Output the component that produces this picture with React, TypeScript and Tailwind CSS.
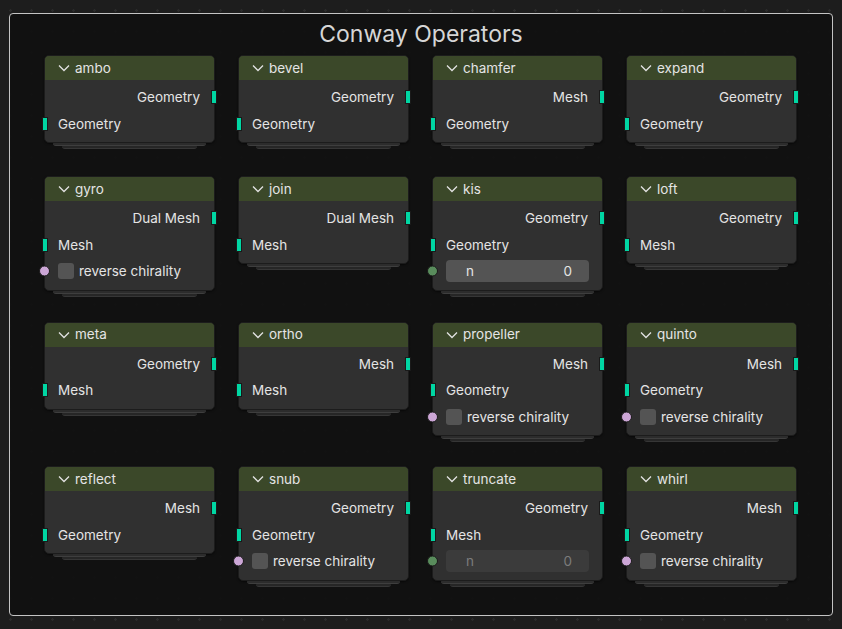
import React from "react";

type Field =
  | { kind: "out"; label: string }
  | { kind: "in"; label: string }
  | { kind: "bool"; label: string }
  | { kind: "int"; label: string; value: number; disabled?: boolean };

interface NodeSpec {
  title: string;
  fields: Field[];
}

const rows: NodeSpec[][] = [
  [
    { title: "ambo", fields: [{ kind: "out", label: "Geometry" }, { kind: "in", label: "Geometry" }] },
    { title: "bevel", fields: [{ kind: "out", label: "Geometry" }, { kind: "in", label: "Geometry" }] },
    { title: "chamfer", fields: [{ kind: "out", label: "Mesh" }, { kind: "in", label: "Geometry" }] },
    { title: "expand", fields: [{ kind: "out", label: "Geometry" }, { kind: "in", label: "Geometry" }] },
  ],
  [
    {
      title: "gyro",
      fields: [
        { kind: "out", label: "Dual Mesh" },
        { kind: "in", label: "Mesh" },
        { kind: "bool", label: "reverse chirality" },
      ],
    },
    { title: "join", fields: [{ kind: "out", label: "Dual Mesh" }, { kind: "in", label: "Mesh" }] },
    {
      title: "kis",
      fields: [
        { kind: "out", label: "Geometry" },
        { kind: "in", label: "Geometry" },
        { kind: "int", label: "n", value: 0 },
      ],
    },
    { title: "loft", fields: [{ kind: "out", label: "Geometry" }, { kind: "in", label: "Mesh" }] },
  ],
  [
    { title: "meta", fields: [{ kind: "out", label: "Geometry" }, { kind: "in", label: "Mesh" }] },
    { title: "ortho", fields: [{ kind: "out", label: "Mesh" }, { kind: "in", label: "Mesh" }] },
    {
      title: "propeller",
      fields: [
        { kind: "out", label: "Mesh" },
        { kind: "in", label: "Geometry" },
        { kind: "bool", label: "reverse chirality" },
      ],
    },
    {
      title: "quinto",
      fields: [
        { kind: "out", label: "Mesh" },
        { kind: "in", label: "Geometry" },
        { kind: "bool", label: "reverse chirality" },
      ],
    },
  ],
  [
    { title: "reflect", fields: [{ kind: "out", label: "Mesh" }, { kind: "in", label: "Geometry" }] },
    {
      title: "snub",
      fields: [
        { kind: "out", label: "Geometry" },
        { kind: "in", label: "Geometry" },
        { kind: "bool", label: "reverse chirality" },
      ],
    },
    {
      title: "truncate",
      fields: [
        { kind: "out", label: "Geometry" },
        { kind: "in", label: "Mesh" },
        { kind: "int", label: "n", value: 0, disabled: true },
      ],
    },
    {
      title: "whirl",
      fields: [
        { kind: "out", label: "Mesh" },
        { kind: "in", label: "Geometry" },
        { kind: "bool", label: "reverse chirality" },
      ],
    },
  ],
];

const rowSpacing = ["mt-0", "mt-[27px]", "mt-[25px]", "mt-[24px]"];

const Chevron = () => (
  <svg width="12" height="8" viewBox="0 0 12 8" className="shrink-0">
    <path d="M1 1.5 L6 6.5 L11 1.5" fill="none" stroke="#e2e2e2" strokeWidth="1.3" />
  </svg>
);

const GeoSocket = ({ side }: { side: "left" | "right" }) => (
  <span
    className={`absolute top-1/2 -translate-y-1/2 w-[6px] h-[14px] bg-[#00d6a3] border border-[#1a1a1a] ${
      side === "left" ? "-left-[3px]" : "-right-[3px]"
    }`}
  />
);

const RoundSocket = ({ color }: { color: string }) => (
  <span
    className={`absolute top-1/2 -translate-y-1/2 -left-[6px] w-[11px] h-[11px] rounded-full border border-[#1a1a1a] ${color}`}
  />
);

const FieldRow = ({ field }: { field: Field }) => {
  if (field.kind === "out") {
    return (
      <div className="relative h-[26.5px] flex items-center justify-end pr-[14px]">
        <span>{field.label}</span>
        <GeoSocket side="right" />
      </div>
    );
  }
  if (field.kind === "in") {
    return (
      <div className="relative h-[26.5px] flex items-center pl-[13px]">
        <span>{field.label}</span>
        <GeoSocket side="left" />
      </div>
    );
  }
  if (field.kind === "bool") {
    return (
      <div className="relative h-[26.5px] flex items-center pl-[13px] gap-[5px]">
        <span className="w-[16px] h-[16px] rounded-[3px] bg-[#545454]" />
        <span>{field.label}</span>
        <RoundSocket color="bg-[#cca6d6]" />
      </div>
    );
  }
  return (
    <div className="relative h-[26.5px] flex items-center pl-[13px] pr-[13px]">
      <div
        className={`flex-1 h-[22px] rounded-[4px] flex items-center justify-between pl-[20px] pr-[17px] ${
          field.disabled ? "bg-[#3b3b3b] text-[#7c7c7c]" : "bg-[#545454]"
        }`}
      >
        <span>{field.label}</span>
        <span>{field.value}</span>
      </div>
      <RoundSocket color="bg-[#598c5c]" />
    </div>
  );
};

const OperatorNode = ({ node }: { node: NodeSpec }) => (
  <div className="w-[171px] flex flex-col">
    <div className="rounded-[5px] border border-[#1c1c1c] bg-[#303030] shadow-[0_1px_2px_rgba(0,0,0,0.5)]">
      <div className="h-[24px] rounded-t-[4px] bg-[#3b4829] flex items-center pl-[13px] gap-[5px]">
        <Chevron />
        <span>{node.title}</span>
      </div>
      <div className="pt-[4px] pb-[5px]">
        {node.fields.map((f, i) => (
          <FieldRow key={i} field={f} />
        ))}
      </div>
    </div>
    {/* stacked layers under the node */}
    <div className="mx-[9px] h-[3px] rounded-b-[3px] bg-[#2c2c2c] border-b border-[#3e3e3e]" />
    <div className="mx-[18px] h-[3px] rounded-b-[3px] bg-[#262626] border-b border-[#363636]" />
  </div>
);

export default function App() {
  return (
    <div
      className="w-[842px] h-[629px] overflow-hidden bg-[#1d1d1d] bg-[radial-gradient(circle,#2b2b2b_1px,transparent_1.5px)] bg-[length:21px_21px] text-[13.5px] text-[#e4e4e4] pt-[13px] pl-[9px]"
      style={{ fontFamily: "Inter, 'Noto Sans', sans-serif" }}
    >
      <div className="w-[824px] h-[603px] rounded-[4px] border border-[#c4c4c4] bg-[#111111]/95 flex flex-col">
        <div className="h-[41px] flex items-center justify-center text-[23px] text-[#d6d6d6]">
          Conway Operators
        </div>
        <div className="pl-[34px] flex flex-col">
          {rows.map((row, r) => (
            <div key={r} className={`flex items-start gap-[23px] ${rowSpacing[r]}`}>
              {row.map((n) => (
                <OperatorNode key={n.title} node={n} />
              ))}
            </div>
          ))}
        </div>
      </div>
    </div>
  );
}
